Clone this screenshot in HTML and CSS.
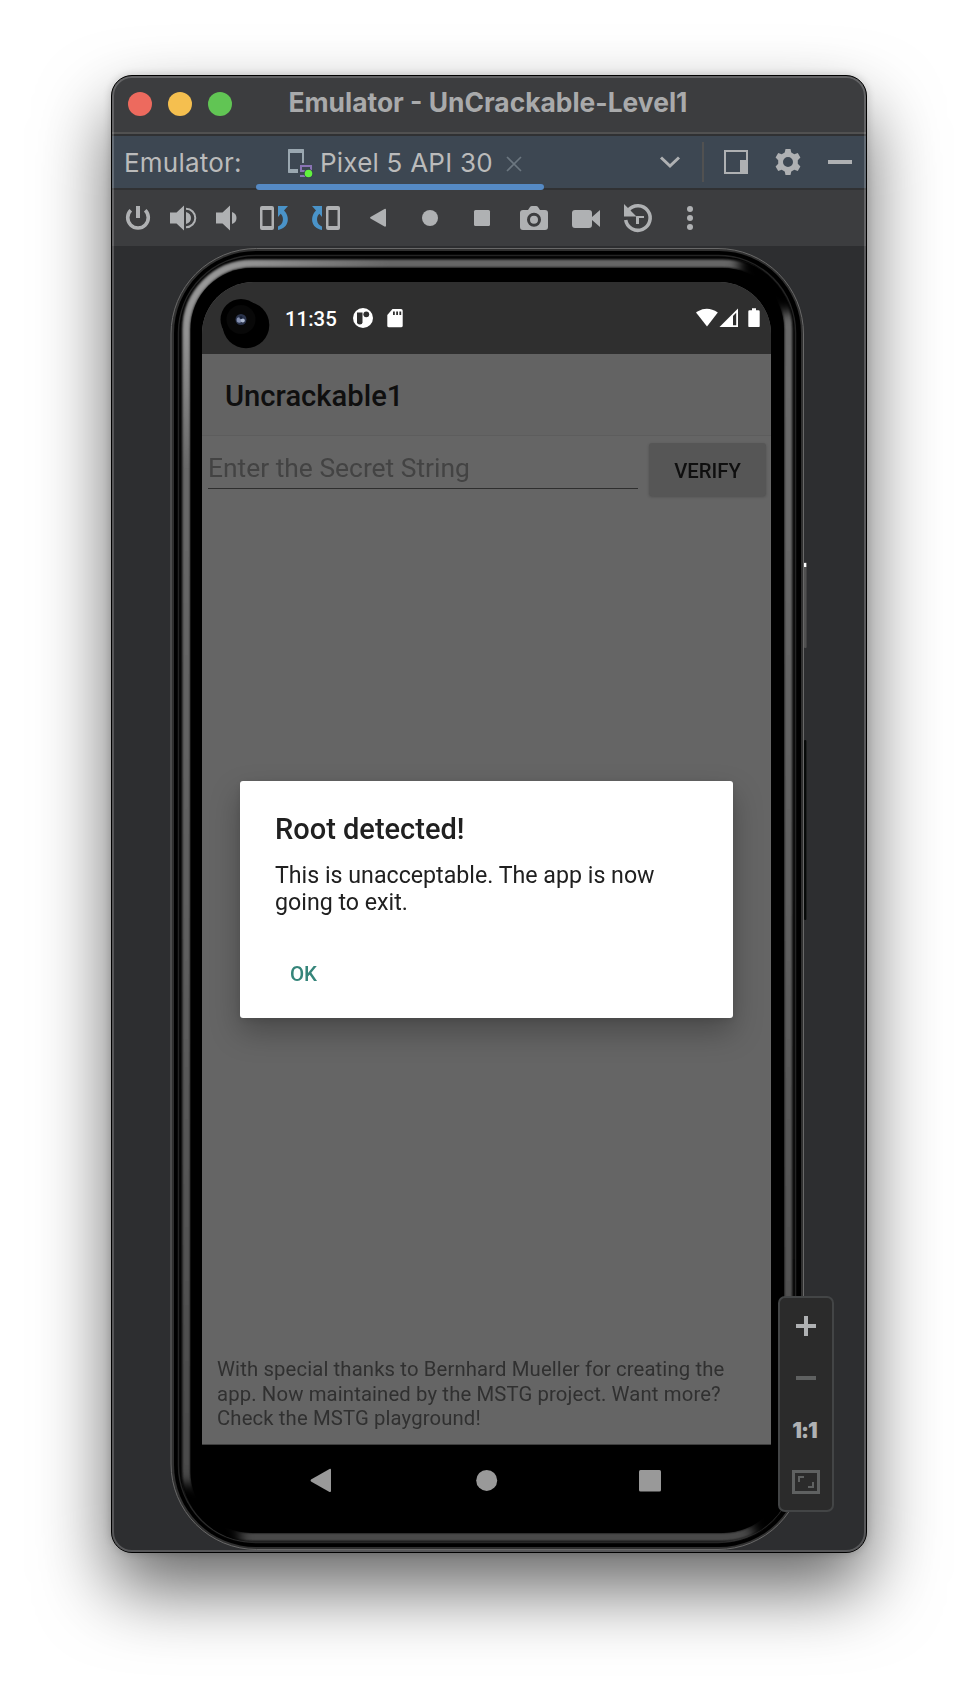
FILE: index.html
```html
<!DOCTYPE html>
<html lang="en">
<head>
<meta charset="utf-8">
<title>Emulator - UnCrackable-Level1</title>
<link rel="stylesheet" href="styles.css">
</head>
<body>
<main class="window">
  <header class="titlebar">
    <div class="lights"><i class="light red"></i><i class="light yellow"></i><i class="light green"></i></div>
    <h1 class="window-title">Emulator - UnCrackable-Level1</h1>
  </header>
  <nav class="tabs">
    <span class="tabs-label">Emulator:</span>
    <div class="tab">
      <svg class="tab-icon" viewBox="286 148 28 32" width="28" height="32"><path d="M298 172.500H289V151.500H303V164" fill="none" stroke="#9aa7b0" stroke-width="2"/><path d="M288 151q0-1 1-1h14q1 0 1 1v3h-16zM288 170h10v4h-9q-1 0-1-1z" fill="#9aa7b0"/><path d="M301 172v-5h10v5M300 172h6M300 177h5" fill="none" stroke="#8a74b5" stroke-width="2"/><circle cx="308.500" cy="174.500" r="4.600" fill="#35424c"/><circle cx="308.500" cy="174.500" r="3.800" fill="#62f13f"/></svg>
      <span class="tab-name">Pixel 5 API 30</span>
      <svg class="tab-close" viewBox="504 154 20 20" width="20" height="20"><path d="M507 157l14 14M521 157l-14 14" stroke="#6c7780" stroke-width="1.600"/></svg>
    </div>
    <div class="tab-actions">
      <svg viewBox="654 136 210 52" width="210" height="52" fill="none" stroke="#afb1b3"><path d="M661 157.500l9 8.500 9-8.500" stroke-width="3"/><path d="M703 142v40" stroke="#515151" stroke-width="2"/><path d="M725 151h22v22h-22z" stroke-width="2"/><path d="M740 160h7v13h-7z" fill="#afb1b3" stroke="none"/><path d="M785.500 149h5l.800 3.500 3 1.700 3.500-1.200 2.600 4.500-2.600 2.700v3.600l2.600 2.700-2.600 4.500-3.500-1.200-3 1.700-.800 3.500h-5l-.800-3.500-3-1.700-3.500 1.200-2.600-4.500 2.600-2.700v-3.600l-2.600-2.700 2.600-4.500 3.500 1.200 3-1.700zM788 157a5 5 0 1 0 0 10a5 5 0 1 0 0-10z" fill="#afb1b3" fill-rule="evenodd" stroke="none"/><path d="M828 162h24" stroke-width="4"/></svg>
    </div>
  </nav>
  <div class="tools">
    <svg viewBox="116 190 44 56" width="44" height="56"><path d="M130.800 210.300a10.300 10.300 0 1 0 14.400 0" fill="none" stroke="#afb1b3" stroke-width="3.600"/><path d="M136 206h4v12h-4z"/></svg>
    <svg viewBox="160 190 44 56" width="44" height="56"><path d="M170 212.500h6.500l7.500-7v25l-7.500-7H170zM186 212q5 1.500 5 6t-5 6z"/><path d="M186 208.700a9.300 9.300 0 0 1 0 18.600" fill="none" stroke="#afb1b3" stroke-width="2"/></svg>
    <svg viewBox="204 190 44 56" width="44" height="56"><path d="M216 212.500h6.500l7.500-7v25l-7.500-7H216zM232 212q4.500 1.500 4.500 6t-4.500 6z"/></svg>
    <svg viewBox="248 190 52 56" width="52" height="56"><path d="M262 206h10q2 0 2 2v20q0 2-2 2h-10q-2 0-2-2v-20q0-2 2-2zM262.500 210v16h9v-16z" fill-rule="evenodd"/><path d="M278 206h10l-4 4.500c6.500 6.500 5 17.500-6 19.500v-3.600c5.500-1.500 6.500-9 2.700-12.600L278 217z" fill="#4a93c8"/></svg>
    <svg viewBox="300 190 52 56" width="52" height="56"><path d="M328 206h10q2 0 2 2v20q0 2-2 2h-10q-2 0-2-2v-20q0-2 2-2zM328.500 210v16h9v-16z" fill-rule="evenodd"/><path d="M322 206h-10l4 4.500c-6.500 6.500-5 17.500 6 19.500v-3.600c-5.500-1.500-6.500-9-2.700-12.600l2.700 3.200z" fill="#4a93c8"/></svg>
    <svg viewBox="352 190 52 56" width="52" height="56"><path d="M370.500 217q-1 .800 0 1.600l14 8q1.500.600 1.500-1v-15.600q0-1.600-1.500-1z"/></svg>
    <svg viewBox="404 190 52 56" width="52" height="56"><circle cx="430" cy="218" r="8"/></svg>
    <svg viewBox="456 190 52 56" width="52" height="56"><rect x="474" y="210" width="16" height="16" rx="1.500"/></svg>
    <svg viewBox="508 190 52 56" width="52" height="56"><path d="M523 210h5l2-3q.600-1 2-1h4q1.400 0 2 1l2 3h5q3 0 3 3v14q0 3-3 3h-22q-3 0-3-3v-14q0-3 3-3z"/><circle cx="534" cy="219.700" r="5.500" fill="none" stroke="#3c3d3f" stroke-width="3"/></svg>
    <svg viewBox="560 190 52 56" width="52" height="56"><path d="M575 210h14q3 0 3 3v4l8-7v17l-8-7v5q0 3-3 3h-14q-3 0-3-3v-12q0-3 3-3z"/></svg>
    <svg viewBox="612 190 52 56" width="52" height="56"><path d="M625.700 220a12.300 12.300 0 1 0 2.800-10" fill="none" stroke="#afb1b3" stroke-width="3.500"/><path d="M624 204v12.500h12.500zM636 216h8v2h-5v6h-3z"/></svg>
    <svg viewBox="664 190 52 56" width="52" height="56"><circle cx="690" cy="209" r="3"/><circle cx="690" cy="218" r="3"/><circle cx="690" cy="227" r="3"/></svg>
  </div>
  <section class="stage">
    <div class="phone">
      <svg class="bezel" viewBox="170 247 640 1304" width="640" height="1304">
        <defs>
          <linearGradient id="side" x1="0" y1="258" x2="0" y2="1540" gradientUnits="userSpaceOnUse"><stop offset="0" stop-color="#666"/><stop offset=".100" stop-color="#6a6a6a"/><stop offset=".500" stop-color="#606060"/><stop offset="1" stop-color="#484848"/></linearGradient>
          <radialGradient id="glint" cx="200" cy="280" r="190" gradientUnits="userSpaceOnUse"><stop offset="0" stop-color="#999"/><stop offset=".300" stop-color="#999" stop-opacity=".850"/><stop offset="1" stop-color="#999" stop-opacity="0"/></radialGradient>
          <filter id="soft" x="-50%" y="-50%" width="200%" height="200%"><feGaussianBlur stdDeviation="6"/></filter>
          <filter id="fine"><feGaussianBlur stdDeviation=".800"/></filter>
          <clipPath id="body"><rect x="181" y="258" width="613" height="1284" rx="73"/></clipPath>
        </defs>
        <rect x="804" y="562" width="2.600" height="86" rx="1" fill="#505050"/>
        <rect x="804" y="563" width="2.300" height="4" fill="#fff"/>
        <rect x="804" y="740" width="2.400" height="180" rx="1" fill="#070a09"/>
        <rect x="170.500" y="248" width="633.500" height="1302" rx="86" fill="#303030"/>
        <rect x="171" y="248.500" width="632.500" height="1301" rx="85.500" fill="none" stroke="#686868"/>
        <rect x="174" y="251" width="627" height="1296" rx="82" fill="#000"/>
        <rect x="178.500" y="255.500" width="617" height="1287" rx="77" fill="none" stroke="#242424" stroke-width="1.500"/>
        <rect x="186.300" y="263.500" width="602" height="1273.500" rx="66" fill="none" stroke="url(#side)" stroke-width="8" filter="url(#fine)"/>
        <rect x="186.300" y="263.500" width="602" height="1273.500" rx="66" fill="none" stroke="url(#glint)" stroke-width="6" filter="url(#fine)"/>
        <g clip-path="url(#body)"><g filter="url(#soft)"><ellipse cx="768" cy="283" rx="38" ry="19" transform="rotate(45 768 283)"/><ellipse cx="207" cy="1517" rx="44" ry="20" transform="rotate(45 207 1517)"/><ellipse cx="774" cy="1512" rx="30" ry="18" transform="rotate(-50 774 1512)"/></g></g>
        <rect x="190.500" y="268" width="593.500" height="1265" rx="61" fill="#000"/>
      </svg>
      <div class="screen">
        <div class="status">
          <svg class="punch" viewBox="218 296 54 54" width="54" height="54"><circle cx="246" cy="325" r="23.300"/><circle cx="241" cy="319.500" r="20.500"/><circle cx="241" cy="319.500" r="14.500" fill="#080808"/><circle cx="241" cy="319.500" r="5.500" fill="#2b344c"/><circle cx="239.300" cy="320" r="2.700" fill="#8490b0"/><circle cx="242.800" cy="320.500" r="2" fill="#aebbd2"/><circle cx="241" cy="317.600" r="1.500" fill="#172036"/></svg>
          <span class="clock">11:35</span>
          <svg class="status-left" viewBox="352 306 52 24" width="52" height="24"><circle cx="363" cy="318" r="10" fill="#fff"/><path d="M357 312.500h5.500v10q0 2-2.700 2t-2.800-2z" fill="#2f2f2f"/><circle cx="366.300" cy="314.300" r="2.900" fill="#2f2f2f"/><path d="M392.500 309H401q1.700 0 1.700 1.700v15q0 1.600-1.700 1.600h-12q-1.700 0-1.700-1.600V315z" fill="#fff"/><path d="M393 311.500h1.800v3.500H393zM396.200 311.500h1.800v3.500h-1.800zM399.400 311.500h1.800v3.500h-1.800z" fill="#2f2f2f"/></svg>
          <svg class="status-right" viewBox="694 306 68 24" width="68" height="24" fill="#fff"><path d="M696 312.500q10.700-7.500 21.800 0L707 326.500z"/><path d="M719.500 327L738 308.500V327zM733 316v9.300h3.200v-12.500z" fill-rule="evenodd"/><path d="M752 308.200h4v2h2.500q1.200 0 1.200 1.200v14.500q0 1.200-1.200 1.200h-9q-1.200 0-1.200-1.200v-14.500q0-1.200 1.200-1.200h2.500z"/></svg>
        </div>
        <div class="appbar">Uncrackable1</div>
        <div class="app">
          <div class="form"><div class="field">Enter the Secret String</div><div class="verify">VERIFY</div></div>
          <p class="thanks">With special thanks to Bernhard Mueller for creating the<br>app. Now maintained by the MSTG project. Want more?<br>Check the MSTG playground!</p>
          <div class="dialog">
            <h2 class="dialog-title">Root detected!</h2>
            <p class="dialog-text">This is unacceptable. The app is now<br>going to exit.</p>
            <span class="dialog-ok">OK</span>
          </div>
        </div>
      </div>
      <div class="navkeys">
        <svg viewBox="300 1460 380 42" width="380" height="42" fill="#999"><path d="M311 1479.600q-1 .900 0 1.800l18.500 10.500q1.500.500 1.500-1v-21q0-1.500-1.500-1z"/><circle cx="486.700" cy="1480.400" r="10.500"/><rect x="639" y="1470" width="22" height="21.500" rx="1.500"/></svg>
      </div>
    </div>
    <aside class="zoom">
      <svg viewBox="0 0 28 52" width="28" height="52"><path d="M4 28h20M14 18v20" stroke="#afb1b3" stroke-width="4"/></svg>
      <svg viewBox="0 0 28 52" width="28" height="52"><path d="M4 28h20" stroke="#5f6161" stroke-width="4"/></svg>
      <span class="ratio">1:1</span>
      <svg viewBox="0 0 28 52" width="28" height="52" fill="none" stroke="#5f6161"><path d="M1.500 17.500h25v21h-25z" stroke-width="3"/><path d="M7 28v-5h5M16 33h5v-5" stroke-width="2"/></svg>
    </aside>
  </section>
</main>
</body>
</html>
```
FILE: styles.css
```css
* { box-sizing: border-box; }
body { margin: 0; height: 1700px; overflow: hidden; background: #fff; font-family: Inter, "Liberation Sans", sans-serif; }
h1, h2, p { margin: 0; }
svg { display: block; flex: none; }
.window { width: 756px; height: 1478px; margin: 75px 0 0 111px; border: 1px solid #000; border-radius: 21px; background: #3c3d3f; overflow: hidden; position: relative; box-shadow: 0 36px 72px rgba(0,0,0,.6), 0 0 8px rgba(0,0,0,.18); }
.window::after { content: ""; position: absolute; inset: 0; border: 2px solid rgba(255,255,255,.2); border-radius: 20px; pointer-events: none; }
.titlebar { height: 60px; display: flex; align-items: center; padding: 0 0 3px 16px; border-bottom: 2px solid #303133; box-shadow: inset 0 -2px #515151; }
.lights { display: flex; gap: 16px; width: 160.500px; }
.light { width: 24px; height: 24px; border-radius: 50%; }
.red { background: #ed6a5e; }
.yellow { background: #f5bf4f; }
.green { background: #61c554; }
.window-title { margin-top: -4px; font-size: 26.400px; line-height: 32px; font-weight: 700; color: #a9aaab; white-space: nowrap; }
.tabs { height: 54px; display: flex; align-items: center; padding-left: 12px; background: #3d4752; border-bottom: 2px solid #303133; color: #bbb; font-size: 26px; letter-spacing: .22px; }
.tabs-label { width: 132px; white-space: nowrap; }
.tab { width: 288px; height: 54px; margin-top: 2px; display: flex; align-items: center; padding: 0 20px 4px 30px; position: relative; }
.tab::after { content: ""; position: absolute; left: 0; right: 0; bottom: 0; height: 6px; border-radius: 3px; background: #558ac5; }
.tab-icon { margin-top: 4px; }
.tab-name { width: 184px; margin: 2px 0 0 6px; white-space: nowrap; }
.tab-close { margin-top: 5px; }
.tab-actions { margin-left: auto; margin-right: 2px; }
.tools { height: 56px; display: flex; padding-left: 4px; fill: #afb1b3; }
.stage { height: 1306px; background: #2d2e30; position: relative; padding: 1px 0 0 58px; }
.phone { width: 640px; height: 1304px; position: relative; padding: 35px 0 0 32px; }
.bezel { position: absolute; left: 0; top: 0; }
.screen { position: relative; width: 569px; height: 1163px; border-radius: 52px 52px 0 0; overflow: hidden; background: #656565; font-family: Roboto, sans-serif; display: flex; flex-direction: column; }
.status { height: 72px; background: #2f2f2f; display: flex; align-items: flex-start; padding: 14px 9px 0 16px; }
.clock { margin: 11px 0 0 13px; width: 66px; font-size: 20.400px; line-height: 24px; font-weight: 500; color: #fff; }
.status-left { margin-top: 10px; margin-left: 1px; }
.status-right { margin: 10px 0 0 auto; }
.appbar { height: 82px; background: #636363; border-bottom: 1px solid #5d5d5d; padding-left: 23px; font-size: 29.200px; line-height: 85px; font-weight: 500; color: #0f0f0f; }
.app { flex: 1; position: relative; display: flex; flex-direction: column; justify-content: space-between; border-bottom: 1px solid #3e3e3e; }
.form { display: flex; justify-content: space-between; padding: 7px 5px 0 6px; }
.field { width: 430px; height: 46px; border-bottom: 1.500px solid #2e2e2e; font-size: 26.400px; line-height: 51px; color: #434343; }
.verify { width: 117px; height: 53px; border-radius: 3px; background: #565656; box-shadow: 0 1px 3px rgba(0,0,0,.22); text-align: center; font-size: 20.300px; line-height: 56px; font-weight: 500; color: #0f0f0f; }
.thanks { padding: 0 0 14px 15px; font-size: 20.300px; line-height: 24.200px; letter-spacing: .13px; color: #303030; white-space: nowrap; }
.dialog { position: absolute; left: 38px; top: 345px; width: 493px; height: 236.500px; padding: 32px 35px; border-radius: 3px; background: #fff; box-shadow: 0 14px 30px rgba(0,0,0,.27), 0 2px 8px rgba(0,0,0,.1); color: #202020; }
.dialog-title { font-size: 29px; line-height: 32px; font-weight: 500; }
.dialog-text { margin-top: 17px; font-size: 23.200px; line-height: 27px; white-space: nowrap; }
.dialog-ok { display: block; margin: 46px 0 0 15px; font-size: 20.500px; line-height: 24px; font-weight: 500; color: #35857a; }
.navkeys { position: relative; padding: 15px 0 0 98px; }
.zoom { position: absolute; left: 666px; top: 1050px; width: 56px; height: 216px; border: 2px solid #434546; border-radius: 7px; background: #2b2b2b; display: flex; flex-direction: column; align-items: center; }
.ratio { height: 52px; padding: 5px 3px 0 0; font-size: 21.500px; line-height: 46px; font-weight: 900; color: #afb1b3; letter-spacing: -1px; }
```
